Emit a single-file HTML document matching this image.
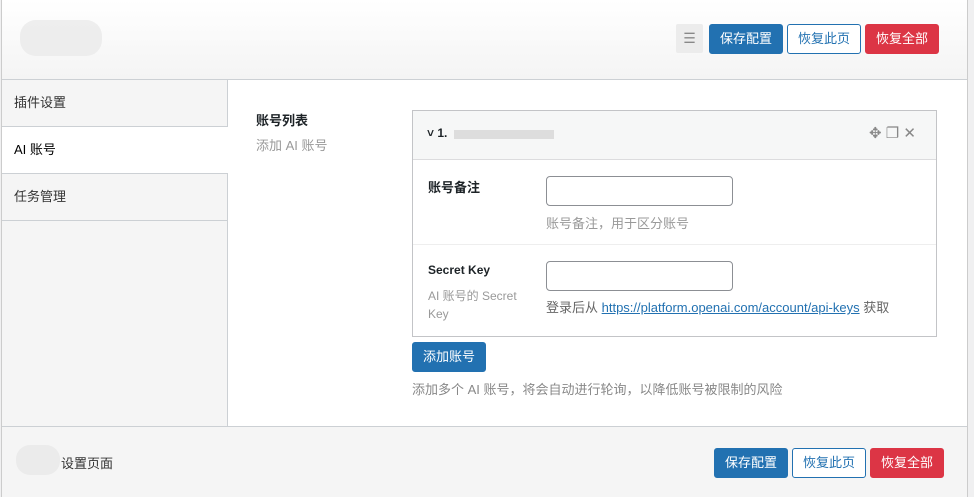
<!DOCTYPE html>
<html><head><meta charset="utf-8"><style>
*{box-sizing:border-box;margin:0;padding:0}
body{width:974px;height:497px;background:#f0f0f1;font-family:"Liberation Sans","Noto Sans CJK SC",sans-serif;font-size:13px;color:#1d2327;position:relative;overflow:hidden}
.wrap{position:absolute;left:1px;top:0;width:967px;height:497px;background:#fff;border-left:1px solid #ccc;border-right:1px solid #ccc}
.hdr{position:absolute;left:0;top:0;width:100%;height:80px;background:linear-gradient(#fff,#f4f4f4);border-bottom:1px solid #ccd0d4}
.btn{position:absolute;height:30px;width:74px;border-radius:3px;font-size:13px;text-align:center;line-height:28px;border:1px solid #2271b1}
.p{background:#2271b1;color:#fff}.s{background:#f6f7f7;color:#2271b1}.d{background:#dc3545;border-color:#dc3545;color:#fff}
.side{position:absolute;left:0;top:80px;width:226px;height:346px;background:#f5f5f5;border-right:1px solid #ccd0d4}
.it{height:47px;border-bottom:1px solid #ccd0d4;padding-left:12px;line-height:46px;color:#333}
.it.a{background:#fff;color:#000;margin-right:-1px}
.card{position:absolute;left:410px;top:110px;width:525px;height:227px;border:1px solid #c3c4c7;background:#fff}
.ch{height:49px;background:#f6f7f7;border-bottom:1px solid #dcdcde}
.inp{position:absolute;left:133px;width:187px;height:30px;border:1px solid #8c8f94;border-radius:4px;background:#fff}
.g{color:#999}
.ftr{position:absolute;left:0;top:426px;width:100%;height:71px;background:#f5f5f5;border-top:1px solid #ccd0d4}
</style></head><body>
<div class="wrap">
<div class="hdr">
<div style="position:absolute;left:18px;top:20px;width:82px;height:36px;background:#eaeaea;border-radius:16px;opacity:.8"></div>
<div style="position:absolute;left:674px;top:24px;width:27px;height:29px;background:#ececec;border-radius:2px;color:#888;text-align:center;line-height:29px;font-size:14px">☰</div>
<div class="btn p" style="left:707px;top:24px">保存配置</div>
<div class="btn s" style="left:785px;top:24px;background:#fff">恢复此页</div>
<div class="btn d" style="left:863px;top:24px">恢复全部</div>
</div>
<div class="side">
<div class="it">插件设置</div><div class="it a">AI 账号</div><div class="it">任务管理</div>
</div>
<div style="position:absolute;left:254px;top:110px;font-weight:bold">账号列表</div>
<div class="g" style="position:absolute;left:254px;top:135px">添加 AI 账号</div>
<div class="card">
<div class="ch"><span style="position:absolute;left:14px;top:15px;font-weight:bold;font-size:12px">˅ 1.</span>
<div style="position:absolute;left:41px;top:19px;width:100px;height:9px;background:#ddd"></div>
<span style="position:absolute;left:456px;top:13px;color:#888;font-size:15px">✥ ❐ ✕</span></div>
<div style="position:absolute;top:49px;left:0;width:100%;height:85px;border-bottom:1px solid #eee">
<div style="position:absolute;left:15px;top:17px;font-weight:bold">账号备注</div>
<div class="inp" style="top:16px"></div>
<div class="g" style="position:absolute;left:133px;top:53px">账号备注，用于区分账号</div></div>
<div style="position:absolute;top:134px;left:0;width:100%">
<div style="position:absolute;left:15px;top:18px;font-weight:bold;font-size:12px">Secret Key</div>
<div class="g" style="position:absolute;left:15px;top:42px;width:110px;font-size:12px;line-height:18px">AI 账号的 Secret Key</div>
<div class="inp" style="top:16px"></div>
<div style="position:absolute;left:133px;top:52px;color:#666">登录后从 <u style="color:#2271b1">https://platform.openai.com/account/api-keys</u> 获取</div></div>
</div>
<div class="btn p" style="left:410px;top:342px">添加账号</div>
<div class="g" style="position:absolute;left:410px;top:379px;color:#888">添加多个 AI 账号，将会自动进行轮询，以降低账号被限制的风险</div>
<div class="ftr">
<div style="position:absolute;left:14px;top:18px;width:44px;height:30px;background:#e8e8e8;border-radius:14px;opacity:.8"></div>
<span style="position:absolute;left:59px;top:26px;color:#333">设置页面</span>
<div class="btn p" style="left:712px;top:21px">保存配置</div>
<div class="btn s" style="left:790px;top:21px;background:#fff">恢复此页</div>
<div class="btn d" style="left:868px;top:21px">恢复全部</div>
</div>
</div>
</body></html>
